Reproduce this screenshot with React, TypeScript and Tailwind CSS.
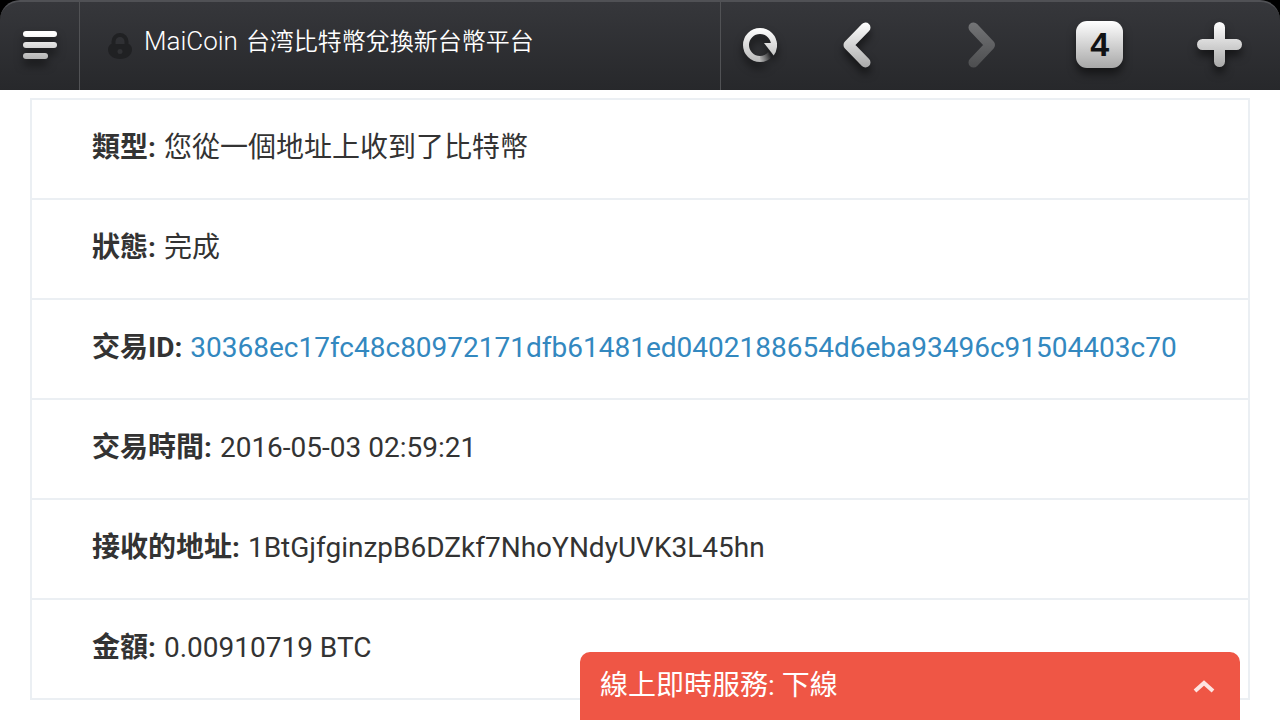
import { useState } from "react";
import type { ReactNode } from "react";

type Detail = {
  label: string;
  value: string;
  href?: string;
};

const DETAILS: Detail[] = [
  { label: "類型", value: "您從一個地址上收到了比特幣" },
  { label: "狀態", value: "完成" },
  {
    label: "交易ID",
    value: "30368ec17fc48c80972171dfb61481ed0402188654d6eba93496c91504403c70",
    href: "#transaction",
  },
  { label: "交易時間", value: "2016-05-03 02:59:21" },
  { label: "接收的地址", value: "1BtGjfginzpB6DZkf7NhoYNdyUVK3L45hn" },
  { label: "金額", value: "0.00910719 BTC" },
];

const iconClass = "drop-shadow-[0_6px_4px_rgba(0,0,0,0.55)]";

// Shared top-to-bottom metal fade, in each icon's own coordinates
function Fade({ id, from, to, y1, y2 }: { id: string; from: string; to: string; y1: number; y2: number }) {
  return (
    <defs>
      <linearGradient id={id} gradientUnits="userSpaceOnUse" x1="0" y1={y1} x2="0" y2={y2}>
        <stop offset="0" stopColor={from} />
        <stop offset="1" stopColor={to} />
      </linearGradient>
    </defs>
  );
}

function MenuIcon() {
  return (
    <svg width="34" height="28" viewBox="0 0 34 28" className={iconClass}>
      <Fade id="menu" from="#ffffff" to="#b4b4b4" y1={3} y2={28} />
      <g fill="url(#menu)">
        <rect x="0" y="0" width="34" height="6" rx="3" />
        <rect x="0" y="11" width="34" height="6" rx="3" />
        <rect x="0" y="22" width="25" height="6" rx="3" />
      </g>
    </svg>
  );
}

function LockIcon() {
  return (
    <svg width="24" height="26" viewBox="0 0 24 26" aria-hidden="true" className="shrink-0">
      <path d="M5.500 14V8.500a6.500 6.500 0 0 1 13 0V14" fill="none" stroke="#202123" strokeWidth="4" />
      <path d="M3 11h18q3 2 3 5.500c0 5.500-5 9.500-12 9.500S0 22 0 16.500q0-3.500 3-5.500z" fill="#202123" />
      <circle cx="12" cy="18.500" r="2.500" fill="#303134" />
    </svg>
  );
}

function ReloadIcon() {
  return (
    <svg width="34" height="34" viewBox="0 0 34 34" className={iconClass}>
      <defs>
        <linearGradient id="reload" gradientUnits="userSpaceOnUse" x1="0" y1="0" x2="0" y2="34">
          <stop offset="0" stopColor="#ffffff" />
          <stop offset="1" stopColor="#b8b8b8" />
        </linearGradient>
        <linearGradient id="reload-tail" gradientUnits="userSpaceOnUse" x1="17" y1="32" x2="28" y2="28">
          <stop offset="0" stopColor="#b8b8b8" />
          <stop offset="1" stopColor="#b8b8b8" stopOpacity="0" />
        </linearGradient>
      </defs>
      <path d="M17 31A14 14 0 1 1 31 17" fill="none" stroke="url(#reload)" strokeWidth="6" />
      <path d="M17 31A14 14 0 0 0 27.500 26" fill="none" stroke="url(#reload-tail)" strokeWidth="6" />
      <path d="M21 15h13v4q-.6 5-3.300 8.500z" fill="url(#reload)" />
    </svg>
  );
}

function BackIcon() {
  return (
    <svg width="32" height="46" viewBox="0 0 32 46" className={iconClass}>
      <Fade id="back" from="#ffffff" to="#a8a8a8" y1={0} y2={46} />
      <path
        d="M22.500 5.500L5.500 23l17 17.500"
        fill="none"
        stroke="url(#back)"
        strokeWidth="10"
        strokeLinecap="round"
        strokeLinejoin="round"
      />
    </svg>
  );
}

function ForwardIcon() {
  return (
    <svg width="32" height="46" viewBox="0 0 32 46">
      <Fade id="forward" from="#747577" to="#4c4d4f" y1={0} y2={46} />
      <path
        d="M10.500 5.500L27 23 10.500 40.500"
        fill="none"
        stroke="url(#forward)"
        strokeWidth="10"
        strokeLinecap="round"
        strokeLinejoin="round"
      />
    </svg>
  );
}

function PlusIcon() {
  return (
    <svg width="45" height="45" viewBox="0 0 45 45" className={iconClass}>
      <Fade id="plus" from="#ffffff" to="#a8a8a8" y1={0} y2={45} />
      <path
        d="M17 5.500a5.500 5.500 0 0 1 11 0V17h11.500a5.500 5.500 0 0 1 0 11H28v11.500a5.500 5.500 0 0 1-11 0V28H5.500a5.500 5.500 0 0 1 0-11H17z"
        fill="url(#plus)"
      />
    </svg>
  );
}

function ToolButton({
  label,
  disabled,
  onClick,
  children,
}: {
  label: string;
  disabled?: boolean;
  onClick?: () => void;
  children: ReactNode;
}) {
  return (
    <button
      type="button"
      aria-label={label}
      disabled={disabled}
      onClick={onClick}
      className="flex flex-1 items-center justify-center pb-[3px]"
    >
      {children}
    </button>
  );
}

function BrowserBar() {
  const [tabs, setTabs] = useState(4);

  return (
    <header className="bg-black">
      <div className="flex h-[90px] rounded-t-[20px] border-t-2 border-[#505155] bg-linear-to-b from-[#36373b] to-[#27282b]">
        <button
          type="button"
          aria-label="選單"
          className="flex w-20 shrink-0 items-center justify-center border-r border-[#515255] pb-0.5"
        >
          <MenuIcon />
        </button>
        <button type="button" className="flex min-w-0 flex-1 items-center gap-3 pl-7 text-left">
          <LockIcon />
          <span className="mb-2.5 flex min-w-0 items-baseline gap-2 font-[350] whitespace-nowrap text-white">
            <span className="text-[26px]">MaiCoin</span>
            <span className="truncate text-2xl">台湾比特幣兌換新台幣平台</span>
          </span>
        </button>
        <div className="flex w-[560px] shrink-0 border-l border-[#515255]">
          <div className="flex w-[78px]">
            <ToolButton label="重新載入">
              <ReloadIcon />
            </ToolButton>
          </div>
          <div className="flex flex-1">
            <ToolButton label="上一頁">
              <BackIcon />
            </ToolButton>
            <ToolButton label="下一頁" disabled>
              <ForwardIcon />
            </ToolButton>
            <ToolButton label="分頁">
              <span className="flex size-[47px] items-center justify-center rounded-[11px] bg-linear-to-b from-white to-[#a8a8a8] font-['Liberation_Sans',sans-serif] text-[34px] font-bold text-[#111214] shadow-[0_6px_8px_rgba(0,0,0,0.5)]">
                {tabs}
              </span>
            </ToolButton>
            <ToolButton label="新增分頁" onClick={() => setTabs(tabs + 1)}>
              <PlusIcon />
            </ToolButton>
          </div>
        </div>
      </div>
    </header>
  );
}

function ChatBar() {
  const [open, setOpen] = useState(false);

  return (
    <button
      type="button"
      aria-expanded={open}
      onClick={() => setOpen(!open)}
      className="fixed right-10 bottom-0 flex h-[68px] w-[660px] items-center justify-between rounded-t-[10px] bg-[#ef5645] pr-6 pl-5 text-[28px] text-white"
    >
      <span>線上即時服務: 下線</span>
      <svg width="24" height="16" viewBox="0 0 24 16" aria-hidden="true">
        <path d="M3 13l9-8 9 8" fill="none" stroke="#fde5e2" strokeWidth="4" />
      </svg>
    </button>
  );
}

export default function App() {
  return (
    <div className="min-h-screen bg-white font-[Roboto,'Noto_Sans_CJK_TC',sans-serif] text-[#333333]">
      <BrowserBar />
      <main className="px-[30px] pt-2 pb-5">
        <dl className="divide-y-2 divide-[#ebeff3] border-2 border-[#ebeff3]">
          {DETAILS.map((item) => (
            <div key={item.label} className="flex gap-2 px-[60px] pt-7 pb-[30px] text-[28px] leading-10">
              <dt className="shrink-0 font-bold">{item.label}:</dt>
              <dd>
                {item.href ? (
                  <a href={item.href} className="text-[#3388bf]">
                    {item.value}
                  </a>
                ) : (
                  item.value
                )}
              </dd>
            </div>
          ))}
        </dl>
      </main>
      <ChatBar />
    </div>
  );
}
